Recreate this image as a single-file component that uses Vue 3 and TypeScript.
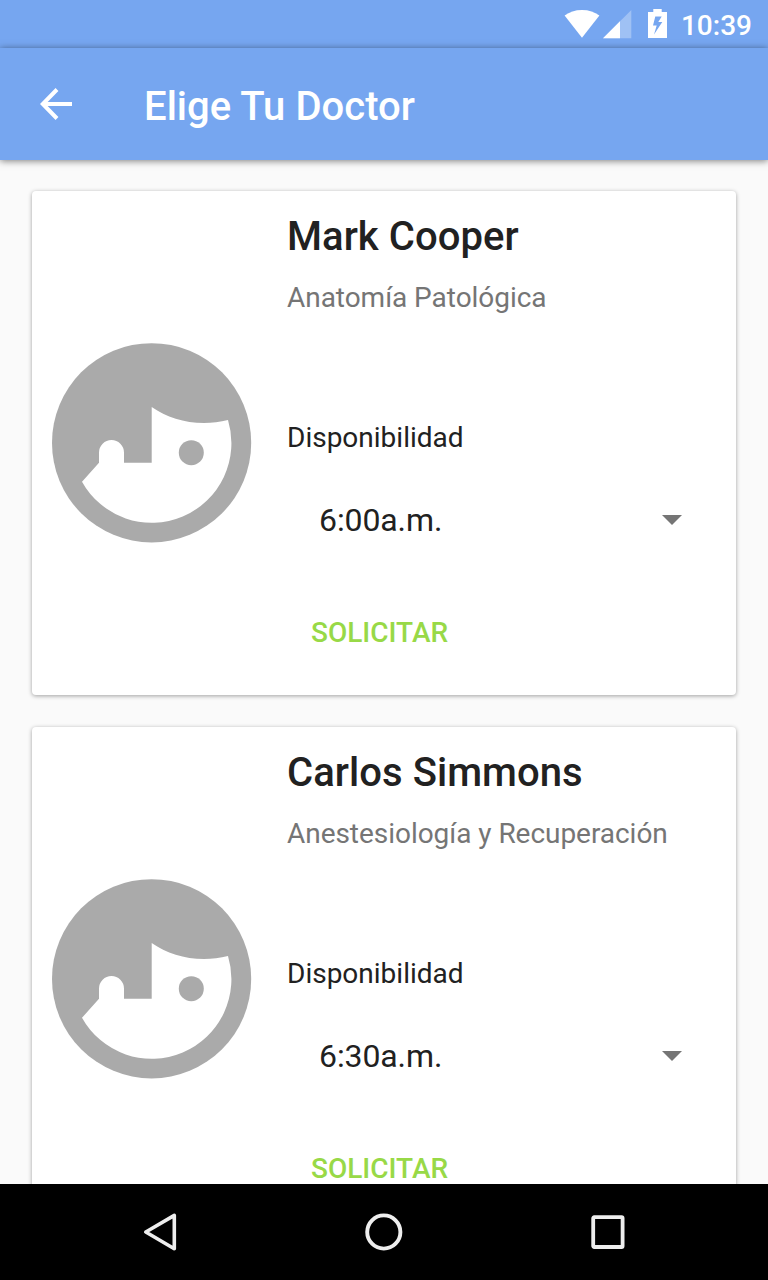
<script setup lang="ts">
interface Doctor {
  name: string
  specialty: string
  slot: string
}

const doctors: Doctor[] = [
  { name: 'Mark Cooper', specialty: 'Anatomía Patológica', slot: '6:00a.m.' },
  { name: 'Carlos Simmons', specialty: 'Anestesiología y Recuperación', slot: '6:30a.m.' },
]
</script>

<template>
  <div class="screen">
    <div class="status">
      <svg class="wifi" width="36" height="30" viewBox="0 0 36 30">
        <path d="M18 28.700 0.600 6.600C5.500 3 11 1 18 1s12.500 2 17.400 5.600z" fill="#fff" />
      </svg>
      <svg class="signal" width="29" height="30" viewBox="0 0 29 30">
        <path d="M0 29.300 28.300 1v28.300z" fill="#fff" fill-opacity="0.3" />
        <path d="M0 29.300 17 12.300v17z" fill="#fff" />
      </svg>
      <svg class="battery" width="19" height="30" viewBox="0 0 19 30">
        <path
          fill="#fff"
          fill-rule="evenodd"
          d="M5.300 0h8.400v3H19v26H0V3h5.300zM7.300 7.500 5 16.500h3.700L6 25.500 14.300 13h-4L13.700 7.500z"
        />
      </svg>
      <span class="clock">10:39</span>
    </div>

    <header class="appbar">
      <svg class="back" width="32" height="32" viewBox="0 0 32 32">
        <path d="M17 1.500 2.800 16 17 30.500M2.800 16H32" fill="none" stroke="#fff" stroke-width="4" />
      </svg>
      <h1 class="title">Elige Tu Doctor</h1>
    </header>

    <main class="list">
      <article v-for="doctor in doctors" :key="doctor.name" class="card">
        <svg class="avatar" width="200" height="200" viewBox="0 0 200 200">
          <circle cx="99.600" cy="99.800" r="99.600" fill="#aaa" />
          <path
            fill="#fff"
            d="M99.700 64C114 74 132 80 152 80C160 80 168 79 176 77A79.700 79.700 0 0 1 30 138.700L47 119.700V109.500A12.500 12.500 0 0 1 72 109.500V119.700H99.700z"
          />
          <circle cx="139.300" cy="109.700" r="12.500" fill="#aaa" />
        </svg>
        <div class="info">
          <h2 class="name">{{ doctor.name }}</h2>
          <p class="specialty">{{ doctor.specialty }}</p>
          <p class="label">Disponibilidad</p>
          <div class="spinner">
            <span>{{ doctor.slot }}</span>
            <svg width="20" height="10" viewBox="0 0 20 10">
              <path d="M0 0h20L10 10z" fill="#757575" />
            </svg>
          </div>
          <button class="request" type="button">SOLICITAR</button>
        </div>
      </article>
    </main>

    <nav class="navbar">
      <svg width="40" height="40" viewBox="0 0 40 40">
        <path d="M34.300 3.400v33.400L5.800 20z" fill="none" stroke="#eee" stroke-width="3.600" stroke-linejoin="round" />
      </svg>
      <svg width="40" height="40" viewBox="0 0 40 40">
        <circle cx="19.800" cy="20" r="16.600" fill="none" stroke="#eee" stroke-width="3.900" />
      </svg>
      <svg width="40" height="40" viewBox="0 0 40 40">
        <rect x="5.200" y="5.200" width="29.400" height="29.800" rx="1" fill="none" stroke="#eee" stroke-width="3.800" />
      </svg>
    </nav>
  </div>
</template>

<style>
body {
  margin: 0;
}
</style>

<style scoped>
.screen {
  width: 768px;
  height: 1280px;
  display: flex;
  flex-direction: column;
  overflow: hidden;
  background: #fafafa;
  color: #212121;
  font-family: Roboto, "Liberation Sans", sans-serif;
}

.status {
  flex: none;
  box-sizing: border-box;
  height: 48px;
  padding: 9px 16px 0 0;
  display: flex;
  justify-content: flex-end;
  align-items: flex-start;
  background: #76a6f0;
}

.signal {
  margin-left: 3px;
}

.battery {
  margin-left: 16px;
}

.clock {
  margin-left: 14px;
  color: #fff;
  font-size: 28px;
  font-weight: 500;
  line-height: 34px;
}

.appbar {
  flex: none;
  position: relative;
  z-index: 1;
  box-sizing: border-box;
  height: 112px;
  padding-left: 40px;
  display: flex;
  align-items: center;
  background: #76a6f0;
  box-shadow: 0 1px 7px rgba(0, 0, 0, 0.5);
}

.title {
  margin: 6px 0 0 72px;
  color: #fff;
  font-size: 40px;
  font-weight: 500;
  line-height: 48px;
  letter-spacing: 0.04px;
}

.list {
  flex: 1;
  min-height: 0;
  overflow: hidden;
  padding: 31px 32px 0;
  display: flex;
  flex-direction: column;
  gap: 32px;
}

.card {
  flex: none;
  box-sizing: border-box;
  height: 504px;
  padding-left: 20px;
  display: flex;
  align-items: center;
  border-radius: 4px;
  background: #fff;
  box-shadow: 0 1px 4px rgba(0, 0, 0, 0.36);
}

.info {
  flex: 1;
  align-self: stretch;
  display: flex;
  flex-direction: column;
  align-items: flex-start;
  padding: 22px 54px 0 35px;
}

.name {
  margin: 0;
  font-size: 40px;
  font-weight: 500;
  line-height: 48px;
  letter-spacing: 0.06px;
}

.specialty,
.label {
  margin: 0;
  font-size: 28px;
  line-height: 40px;
}

.specialty {
  margin-top: 17px;
  color: #757575;
  letter-spacing: -0.04px;
}

.label {
  margin-top: 100px;
}

.spinner {
  align-self: stretch;
  margin-top: 42px;
  padding-left: 32px;
  display: flex;
  justify-content: space-between;
  align-items: center;
  font-size: 32px;
  line-height: 40px;
  letter-spacing: -0.1px;
}

.request {
  margin: 73px 0 0 24px;
  padding: 0;
  border: 0;
  background: none;
  color: #98d947;
  font: inherit;
  font-size: 28px;
  font-weight: 500;
  line-height: 40px;
}

.navbar {
  flex: none;
  position: relative;
  z-index: 1;
  height: 96px;
  padding: 0 140px;
  display: flex;
  justify-content: space-between;
  align-items: center;
  background: #000;
}
</style>
